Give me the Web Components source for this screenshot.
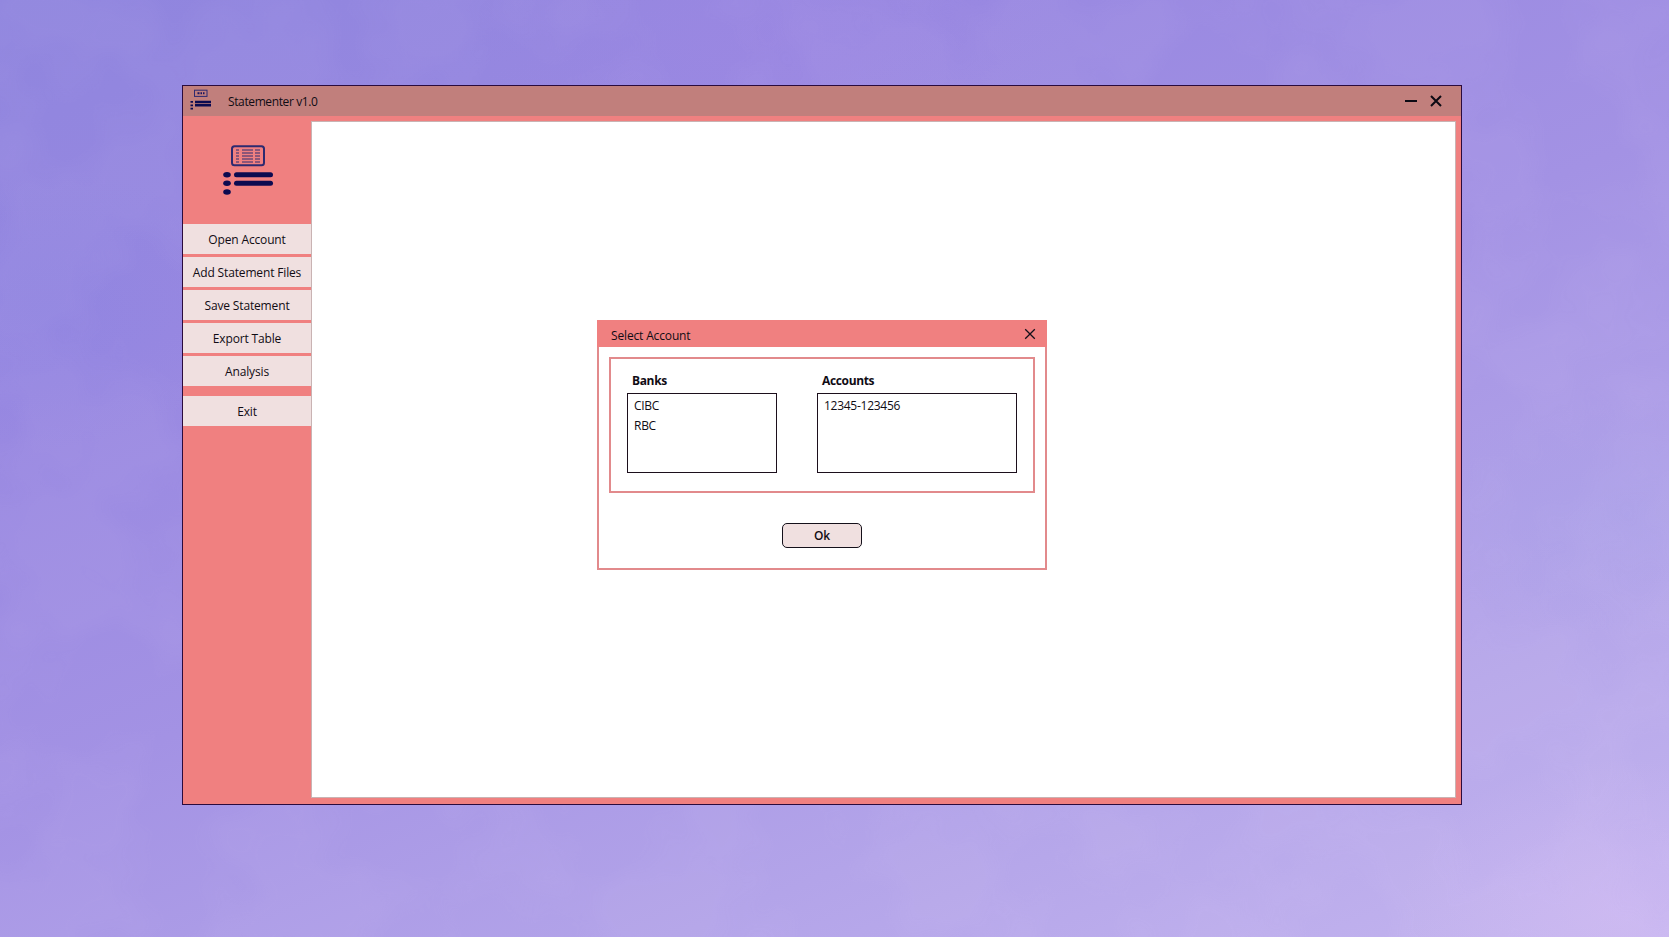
<!DOCTYPE html>
<html lang="en">
<head>
<meta charset="utf-8">
<title>Statementer</title>
<style>
  html, body { margin: 0; height: 100%; overflow: hidden; }
  body { font-family: 'Open Sans', 'Noto Sans', sans-serif; font-size: 12px; font-weight: 500; letter-spacing: -0.15px; color: #100c14; }
</style>
</head>
<body>
<desktop-page>
  <app-window title-text="Statementer v1.0">
    <side-button slot="side">Open Account</side-button>
    <side-button slot="side">Add Statement Files</side-button>
    <side-button slot="side">Save Statement</side-button>
    <side-button slot="side">Export Table</side-button>
    <side-button slot="side">Analysis</side-button>
    <side-button slot="side" class="exit" style="margin-top:7px">Exit</side-button>
    <account-dialog slot="dialog" dialog-title="Select Account">
      <list-box slot="banks" label="Banks" style="width:150px" items='["CIBC","RBC"]'></list-box>
      <list-box slot="accounts" label="Accounts" style="width:200px" items='["12345-123456"]'></list-box>
    </account-dialog>
  </app-window>
</desktop-page>

<script>
class DesktopPage extends HTMLElement {
  constructor() {
    super();
    this.attachShadow({ mode: 'open' });
  }

  connectedCallback() {
    this.shadowRoot.innerHTML = `
    <style>
      :host {
        display: block;
        position: relative;
        width: 1669px;
        height: 937px;
        box-sizing: border-box;
        padding: 85px 0 0 182px;
        overflow: hidden;
        background:
          radial-gradient(ellipse 300px 160px at 46% 4%, rgba(165, 135, 230, 0.25), transparent),
          radial-gradient(ellipse 200px 140px at 3% 33%, rgba(125, 125, 225, 0.2), transparent),
          radial-gradient(ellipse 220px 120px at 97% 55%, rgba(160, 160, 232, 0.25), transparent),
          radial-gradient(ellipse 220px 150px at 97% 97%, rgba(215, 190, 245, 0.4), transparent),
          linear-gradient(158deg, #8f85de 0%, #9888e1 25%, #a392e4 50%, #b3a4e9 75%, #c4b5ef 100%);
      }
      svg { position: absolute; inset: 0; width: 100%; height: 100%; opacity: 0.04; }
      .front { position: relative; }
    </style>
    <svg aria-hidden="true">
      <filter id="marble" x="0" y="0" width="100%" height="100%">
        <feTurbulence type="fractalNoise" baseFrequency="0.008" numOctaves="3" seed="7"/>
        <feColorMatrix values="0 0 0 0 1  0 0 0 0 0.85  0 0 0 0 1  4 0 0 0 -1.5"/>
        <feComponentTransfer>
          <funcA type="discrete" tableValues="0 .7 0 .7 0 .7 0 .7 0 .7 0 .7 0 .7 0 .7 0 .7 0 .7 0 .7 0 .7"/>
        </feComponentTransfer>
        <feGaussianBlur stdDeviation="0.5"/>
      </filter>
      <rect width="100%" height="100%" filter="url(#marble)"/>
    </svg>
    <div class="front"><slot></slot></div>
    `;
  }
}

class AppWindow extends HTMLElement {
  constructor() {
    super();
    this.attachShadow({ mode: 'open' });
  }

  connectedCallback() {
    const title = this.getAttribute('title-text') || '';
    this.shadowRoot.innerHTML = `
    <style>
      :host {
        display: flex;
        flex-direction: column;
        position: relative;
        box-sizing: border-box;
        width: 1280px;
        height: 720px;
        border: 1px solid #2b0b3d;
        background: #f08080;
      }
      .titlebar {
        display: flex;
        align-items: center;
        height: 30px;
        flex: none;
        background: #c17f7c;
      }
      .titlebar .app-icon { width: 24px; height: 24px; margin: 0 0 2px 7px; flex: none; }
      .titlebar .name { margin-left: 14px; flex: 1; letter-spacing: -0.38px; }
      .titlebar svg.ctl { flex: none; width: 14px; height: 14px; }
      .titlebar .min { margin-right: 11px; }
      .titlebar .close { margin-right: 18px; }
      .body { flex: 1; display: flex; min-height: 0; }
      .side { width: 128px; flex: none; display: flex; flex-direction: column; gap: 3px; }
      .logo { height: 105px; padding-top: 26px; box-sizing: border-box; flex: none; }
      .logo svg { display: block; width: 56px; height: 56px; margin-left: 36px; }
      .main {
        flex: 1;
        margin: 5px 5px 6px 0;
        background: #fff;
        border: 1px solid #c9b3b3;
      }
      ::slotted([slot="dialog"]) { position: absolute; left: 414px; top: 234px; }
    </style>
    <div class="titlebar">
      <svg class="app-icon" viewBox="0 0 24 24">
        <rect x="4.500" y="2.200" width="12.500" height="6.200" fill="none" stroke="#2d2a70" stroke-width="1"/>
        <path d="M7.500 5.300h2M10.500 5.300h1.500M13 5.300h1.500" stroke="#1a1560" stroke-width="2"/>
        <path d="M5 13.900h16M5 17.300h16" stroke="#0c0a50" stroke-width="2.500"/>
        <path d="M.5 13.900h2.500M.5 17.300h2.500M.5 20.700h2.500" stroke="#0c0a50" stroke-width="1.800"/>
      </svg>
      <span class="name">${title}</span>
      <svg class="ctl min" viewBox="0 0 14 14"><path d="M1 7h12" stroke="#0c0a14" stroke-width="2"/></svg>
      <svg class="ctl close" viewBox="0 0 14 14"><path d="M2 2l10 10M12 2L2 12" stroke="#0c0a14" stroke-width="2"/></svg>
    </div>
    <div class="body">
      <div class="side">
        <div class="logo">
          <svg viewBox="0 0 56 56">
            <rect x="13" y="4.300" width="32" height="19" rx="2.500" fill="none" stroke="#2d2a70" stroke-width="2"/>
            <path d="M17 8h3M17 11h3M17 14h3M17 17h3M17 20h3" stroke="#2d2a70" stroke-width="1"/>
            <path d="M23 8h11M23 11h11M23 14h11M23 17h11M23 20h11" stroke="#2d2a70" stroke-width="1"/>
            <path d="M36 8h5M36 11h5M36 14h5M36 17h5M36 20h5" stroke="#2d2a70" stroke-width="1"/>
            <g fill="#0c0a50">
              <ellipse cx="8" cy="32.700" rx="3.800" ry="2.700"/>
              <ellipse cx="8" cy="41.300" rx="3.800" ry="2.700"/>
              <ellipse cx="8" cy="50" rx="3.800" ry="2.700"/>
              <rect x="15" y="30.200" width="39" height="5" rx="2.500"/>
              <rect x="15" y="38.800" width="39" height="5" rx="2.500"/>
            </g>
          </svg>
        </div>
        <slot name="side"></slot>
      </div>
      <div class="main"></div>
    </div>
    <slot name="dialog"></slot>
    `;
  }
}

class SideButton extends HTMLElement {
  constructor() {
    super();
    this.attachShadow({ mode: 'open' });
    this.shadowRoot.innerHTML = `
    <style>
      :host {
        display: flex;
        align-items: center;
        justify-content: center;
        height: 30px;
        flex: none;
        background: #f0e0e0;
        cursor: default;
      }
    </style>
    <slot></slot>
    `;
  }
}

class AccountDialog extends HTMLElement {
  constructor() {
    super();
    this.attachShadow({ mode: 'open' });
  }

  connectedCallback() {
    this.shadowRoot.innerHTML = `
    <style>
      :host {
        display: flex;
        flex-direction: column;
        box-sizing: border-box;
        width: 450px;
        height: 250px;
        background: #fff;
        border: 2px solid #e28a8c;
        border-top: 0;
      }
      header {
        display: flex;
        align-items: center;
        justify-content: space-between;
        height: 27px;
        flex: none;
        margin: 0 -2px;
        padding: 0 11px 0 14px;
        background: #f08080;
      }
      header span { padding-top: 4px; }
      header svg { width: 12px; height: 12px; }
      .group {
        display: flex;
        gap: 40px;
        height: 136px;
        box-sizing: border-box;
        margin: 10px 10px 0;
        padding: 14px 16px 0;
        border: 2px solid #e28a8c;
      }
      button {
        align-self: center;
        width: 80px;
        height: 25px;
        margin-top: 30px;
        padding: 0;
        font: inherit;
        font-weight: 600;
        letter-spacing: inherit;
        color: inherit;
        background: #f0e0e0;
        border: 1px solid #14101a;
        border-radius: 5px;
      }
    </style>
    <header>
      <span>${this.getAttribute('dialog-title') || ''}</span>
      <svg viewBox="0 0 12 12"><path d="M1.200 1.200l9.600 9.600M10.800 1.200l-9.600 9.600" stroke="#14101a" stroke-width="1.300"/></svg>
    </header>
    <div class="group">
      <slot name="banks"></slot>
      <slot name="accounts"></slot>
    </div>
    <button type="button">Ok</button>
    `;
  }
}

class ListBox extends HTMLElement {
  constructor() {
    super();
    this.attachShadow({ mode: 'open' });
  }

  connectedCallback() {
    const items = this.getAttribute('items')
      ? JSON.parse(this.getAttribute('items'))
      : [];

    this.shadowRoot.innerHTML = `
    <style>
      :host { display: block; flex: none; }
      .label { height: 16px; line-height: 16px; margin: 0 0 4px 5px; font-weight: 700; letter-spacing: -0.35px; }
      .box {
        box-sizing: border-box;
        height: 80px;
        padding: 2px 6px;
        border: 1px solid #1c0f1c;
        font-weight: 400;
        letter-spacing: -0.27px;
      }
      .row { height: 20px; line-height: 20px; }
    </style>
    <div class="label">${this.getAttribute('label') || ''}</div>
    <div class="box">
      ${items.map((item) => `<div class="row">${item}</div>`).join('')}
    </div>
    `;
  }
}

customElements.define('desktop-page', DesktopPage);
customElements.define('app-window', AppWindow);
customElements.define('side-button', SideButton);
customElements.define('account-dialog', AccountDialog);
customElements.define('list-box', ListBox);
</script>
</body>
</html>
